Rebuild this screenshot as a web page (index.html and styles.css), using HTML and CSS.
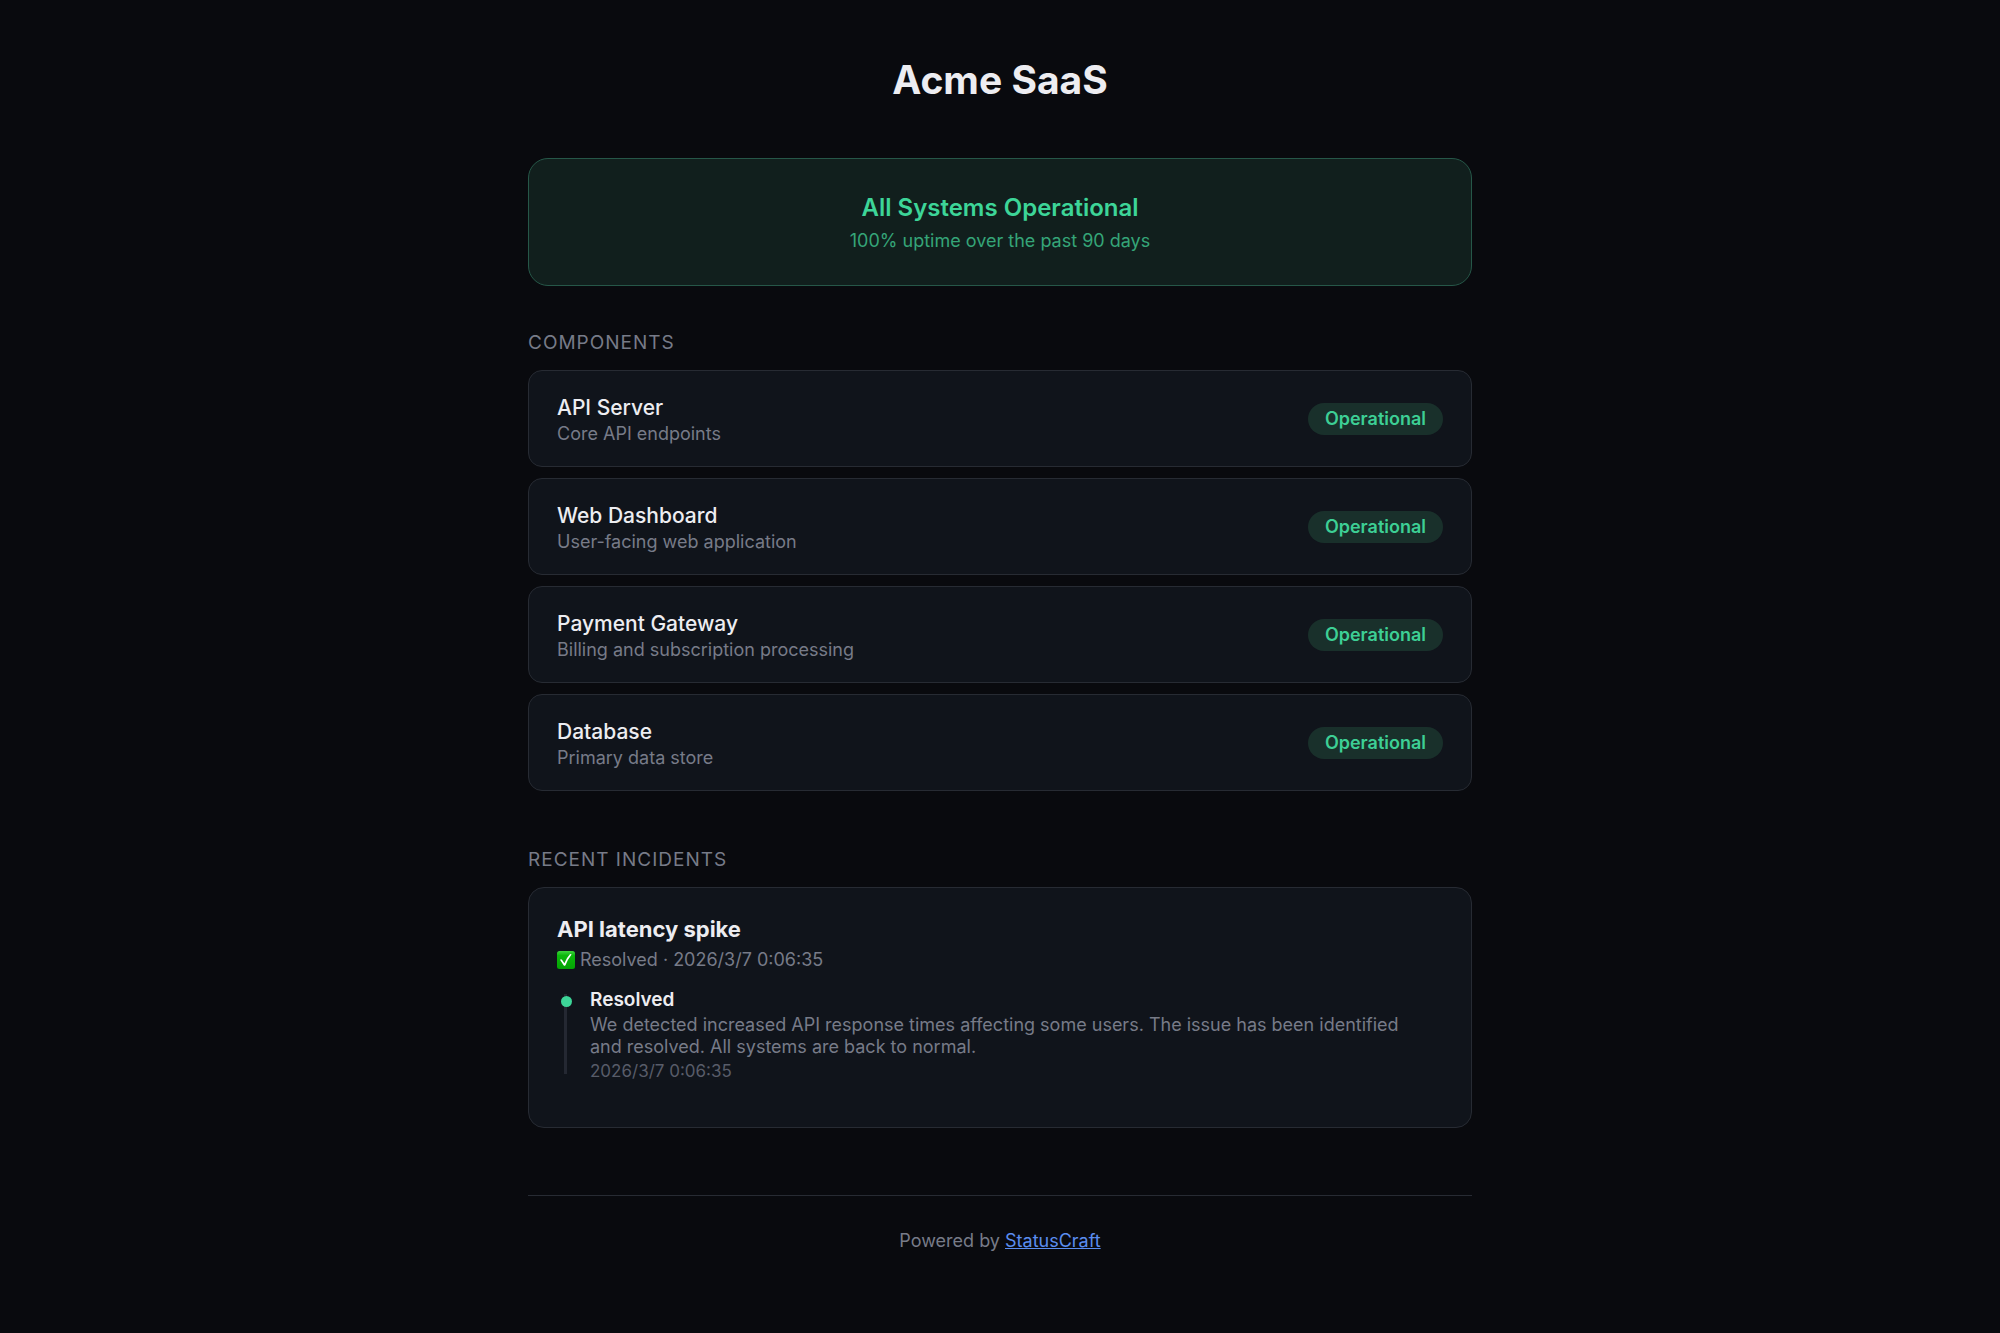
FILE: index.html
```html
<!DOCTYPE html>
<html lang="en">
<head>
<meta charset="utf-8">
<meta name="viewport" content="width=device-width, initial-scale=1">
<title>Acme SaaS Status</title>
<link rel="stylesheet" href="styles.css">
</head>
<body>
<div class="page">
  <header class="header"><h1 class="title">Acme SaaS</h1></header>
  <main>
    <section class="banner">
      <h2 class="banner-title">All Systems Operational</h2>
      <p class="banner-text">100% uptime over the past 90 days</p>
    </section>
    <section class="section">
      <h2 class="label">Components</h2>
      <ul class="list">
        <li class="card component">
          <div><h3 class="name">API Server</h3><p class="desc">Core API endpoints</p></div>
          <span class="badge">Operational</span>
        </li>
        <li class="card component">
          <div><h3 class="name">Web Dashboard</h3><p class="desc">User-facing web application</p></div>
          <span class="badge">Operational</span>
        </li>
        <li class="card component">
          <div><h3 class="name">Payment Gateway</h3><p class="desc">Billing and subscription processing</p></div>
          <span class="badge">Operational</span>
        </li>
        <li class="card component">
          <div><h3 class="name">Database</h3><p class="desc">Primary data store</p></div>
          <span class="badge">Operational</span>
        </li>
      </ul>
    </section>
    <section class="section incidents">
      <h2 class="label">Recent Incidents</h2>
      <article class="card incident">
        <h3 class="incident-title">API latency spike</h3>
        <p class="meta">
          <svg class="check" viewBox="0 0 18 18" aria-hidden="true">
            <defs><linearGradient id="green" x1="0" y1="0" x2="0" y2="1"><stop offset="0" stop-color="#3fd43f"/><stop offset=".25" stop-color="#0cb80c"/><stop offset="1" stop-color="#04a404"/></linearGradient></defs>
            <rect width="18" height="18" rx="2.5" fill="url(#green)"/>
            <path d="M3 8.8Q4.2 7.6 5 8.8L7.4 12.2Q9.6 6.6 12.9 3.2Q13.8 2.5 14.6 3.4Q10.6 8.4 8.6 14Q7.6 15.6 6.6 14.2Z" fill="#fff"/>
          </svg>
          <span>Resolved · 2026/3/7 0:06:35</span>
        </p>
        <div class="update">
          <div class="rail"><span class="dot"></span></div>
          <div class="update-body">
            <h4 class="update-title">Resolved</h4>
            <p class="update-text">We detected increased API response times affecting some users. The issue has been identified and resolved. All systems are back to normal.</p>
            <time class="time">2026/3/7 0:06:35</time>
          </div>
        </div>
      </article>
    </section>
  </main>
  <footer class="footer">Powered by <a class="link" href="#">StatusCraft</a></footer>
</div>
</body>
</html>
```
FILE: styles.css
```css
* { box-sizing: border-box; }
body {
  margin: 0;
  background: #090a0e;
  color: #ededf1;
  font-family: Inter, "Liberation Sans", sans-serif;
  font-size: 18px;
  line-height: 22px;
}
h1, h2, h3, h4, p, ul { margin: 0; padding: 0; }
.page { max-width: 992px; margin: 0 auto; padding: 56px 24px; }
.header { text-align: center; }
.title { font-size: 39px; line-height: 48px; font-weight: 700; }
.banner {
  margin-top: 54px;
  padding: 33px 24px 31px;
  border: 1px solid #265748;
  border-radius: 20px;
  background: #111f1d;
  text-align: center;
}
.banner-title { font-size: 24px; line-height: 32px; font-weight: 600; color: #3dd598; }
.banner-text { margin-top: 4px; font-size: 18px; line-height: 26px; color: #35a578; }
.section { margin-top: 45px; }
.incidents { margin-top: 57px; }
.label {
  margin-bottom: 15px;
  font-size: 19px;
  line-height: 24px;
  font-weight: 400;
  letter-spacing: 1px;
  text-transform: uppercase;
  color: #777b88;
}
.list { display: grid; gap: 11px; list-style: none; }
.card { border: 1px solid #272b33; background: #10141b; }
.component {
  display: flex;
  align-items: center;
  justify-content: space-between;
  min-height: 97px;
  padding: 20px 28px;
  border-radius: 14px;
}
.name { padding-top: 2px; font-size: 21px; line-height: 28px; font-weight: 500; }
.desc { line-height: 24px; color: #777b88; }
.badge {
  padding: 5px 17px;
  border-radius: 16px;
  background: #19302b;
  color: #3dcf95;
  font-weight: 600;
}
.incident { padding: 27px 28px 45px; border-radius: 16px; }
.incident-title { font-size: 22px; line-height: 28px; font-weight: 700; }
.meta { display: flex; align-items: center; gap: 5px; margin-top: 5px; line-height: 24px; color: #777b88; }
.check { width: 18px; height: 18px; }
.update { display: flex; gap: 23px; margin-top: 17px; }
.rail {
  position: relative;
  flex: none;
  width: 3px;
  margin: 5px 0 8px 7px;
  background: #242832;
}
.dot {
  position: absolute;
  top: 2px;
  left: -3px;
  width: 11px;
  height: 11px;
  border-radius: 50%;
  background: #3dd598;
}
.update-body { padding-right: 20px; }
.update-title { font-size: 19px; font-weight: 600; }
.update-text { margin-top: 3px; color: #777b88; }
.time { display: block; margin-top: 2px; font-size: 17px; color: #585c69; }
.footer { margin-top: 67px; padding-top: 34px; border-top: 1px solid #272b33; text-align: center; color: #777b88; }
.link { color: #5b8def; }
```
